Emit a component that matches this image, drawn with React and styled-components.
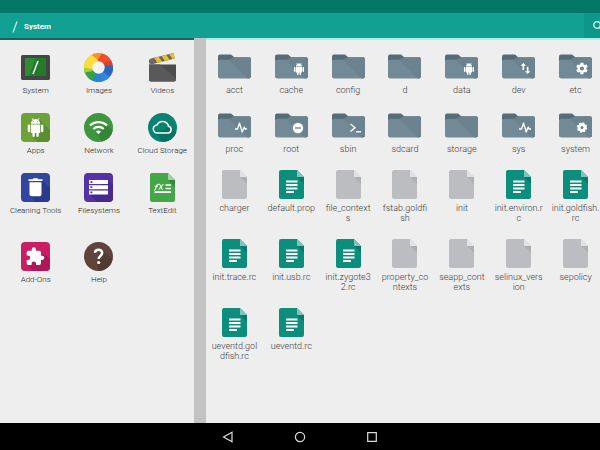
import React from 'react'
import styled, { createGlobalStyle } from 'styled-components'

const places = [
  { name: 'System', icon: 'system' },
  { name: 'Images', icon: 'images' },
  { name: 'Videos', icon: 'videos' },
  { name: 'Apps', icon: 'apps' },
  { name: 'Network', icon: 'network' },
  { name: 'Cloud Storage', icon: 'cloud' },
  { name: 'Cleaning Tools', icon: 'cleaning' },
  { name: 'Filesystems', icon: 'filesystems' },
  { name: 'TextEdit', icon: 'textedit' },
]

const extras = [
  { name: 'Add-Ons', icon: 'addons' },
  { name: 'Help', icon: 'help' },
]

const files = [
  { name: 'acct', type: 'folder' },
  { name: 'cache', type: 'folder', badge: 'android' },
  { name: 'config', type: 'folder' },
  { name: 'd', type: 'folder' },
  { name: 'data', type: 'folder', badge: 'android' },
  { name: 'dev', type: 'folder', badge: 'arrows' },
  { name: 'etc', type: 'folder', badge: 'gear' },
  { name: 'proc', type: 'folder', badge: 'pulse' },
  { name: 'root', type: 'folder', badge: 'minus' },
  { name: 'sbin', type: 'folder', badge: 'prompt' },
  { name: 'sdcard', type: 'folder' },
  { name: 'storage', type: 'folder' },
  { name: 'sys', type: 'folder', badge: 'pulse' },
  { name: 'system', type: 'folder', badge: 'disc' },
  { name: 'charger', type: 'blank' },
  { name: 'default.prop', type: 'text' },
  { name: 'file_context\ns', type: 'blank' },
  { name: 'fstab.goldfi\nsh', type: 'blank' },
  { name: 'init', type: 'blank' },
  { name: 'init.environ.r\nc', type: 'text' },
  { name: 'init.goldfish.\nrc', type: 'text' },
  { name: 'init.trace.rc', type: 'text' },
  { name: 'init.usb.rc', type: 'text' },
  { name: 'init.zygote3\n2.rc', type: 'text' },
  { name: 'property_co\nntexts', type: 'blank' },
  { name: 'seapp_cont\nexts', type: 'blank' },
  { name: 'selinux_vers\nion', type: 'blank' },
  { name: 'sepolicy', type: 'blank' },
  { name: 'ueventd.gol\ndfish.rc', type: 'text' },
  { name: 'ueventd.rc', type: 'text' },
]

function Android() {
  return (
    <g fill="#fff">
      <path d="M6 8h12v10a1 1 0 0 1-1 1h-1v3.500a1.500 1.500 0 0 1-3 0V19h-2v3.500a1.500 1.500 0 0 1-3 0V19H7a1 1 0 0 1-1-1z" />
      <path d="M3.500 8A1.500 1.500 0 0 1 5 9.500v7a1.500 1.500 0 0 1-3 0v-7A1.500 1.500 0 0 1 3.500 8zM20.500 8A1.500 1.500 0 0 1 22 9.500v7a1.500 1.500 0 0 1-3 0v-7A1.500 1.500 0 0 1 20.500 8z" />
      <path d="M15.530 2.160l1.300-1.300a.5.5 0 0 0-.7-.7l-1.480 1.480A5.900 5.900 0 0 0 12 1c-.960 0-1.860.230-2.660.630L7.850.150a.5.5 0 0 0-.7.7l1.310 1.310A5.980 5.980 0 0 0 6 7h12a5.960 5.960 0 0 0-2.470-4.840zM10 5H9V4h1zm5 0h-1V4h1z" />
    </g>
  )
}

const gearPath = 'M19.430 12.980c.040-.320.070-.640.070-.980s-.030-.660-.070-.980l2.110-1.650a.5.5 0 0 0 .120-.640l-2-3.460a.5.5 0 0 0-.610-.220l-2.490 1a7.300 7.300 0 0 0-1.690-.980l-.380-2.650A.49.49 0 0 0 14 2h-4a.49.49 0 0 0-.490.420l-.380 2.650c-.610.250-1.170.590-1.690.980l-2.490-1a.49.49 0 0 0-.610.220l-2 3.460a.49.49 0 0 0 .120.640l2.110 1.650c-.040.320-.070.650-.070.980s.030.660.070.980l-2.110 1.650a.5.5 0 0 0-.120.640l2 3.460c.120.220.390.3.610.220l2.490-1c.520.4 1.080.730 1.690.980l.380 2.650c.030.240.240.420.490.420h4c.250 0 .460-.180.490-.420l.380-2.650a7.700 7.700 0 0 0 1.690-.980l2.490 1c.230.090.490 0 .610-.220l2-3.460a.5.5 0 0 0-.120-.640zM12 15.500a3.500 3.500 0 1 1 0-7 3.500 3.500 0 0 1 0 7z'

const badges = {
  android: <g transform="translate(18 9) scale(.5)"><Android /></g>,
  arrows: (
    <g transform="translate(17 8) scale(.54)" fill="#fff">
      <path d="M8 2l5 5H9.500v8h-3V7H3z" />
      <path d="M16 22l-5-5h3.500V9h3v8H21z" />
    </g>
  ),
  gear: <path transform="translate(16 7.500) scale(.58)" fill="#fff" d={gearPath} />,
  pulse: <path d="M17 16h2.500l2-6 2.700 9 2-5 .8 2H29" fill="none" stroke="#fff" strokeWidth="1.300" strokeLinejoin="round" />,
  minus: (
    <g>
      <circle cx="23" cy="15" r="5.200" fill="#fff" />
      <path d="M20 15h6" stroke="#66808c" strokeWidth="1.300" />
    </g>
  ),
  prompt: <path d="M18.500 11l4.500 3.700-4.500 3.800M24 18.800h5" fill="none" stroke="#fff" strokeWidth="1.400" />,
  disc: (
    <g>
      <circle cx="23" cy="14.500" r="4.400" fill="none" stroke="#fff" strokeWidth="1.600" strokeDasharray="1.800 1.655" />
      <circle cx="23" cy="14.500" r="4.400" fill="#fff" />
      <circle cx="23" cy="14.500" r="1.500" fill="#6c858f" />
    </g>
  ),
}

function FolderIcon({ badge }) {
  return (
    <svg width="33" height="25" viewBox="0 0 33 25" aria-hidden="true">
      <path d="M0 7V2.500A2 2 0 0 1 2 .5h11l3 2.500v4z" fill="#566d78" />
      <path d="M0 8c.2-1.600 1-2.300 2.500-2.300H13l3-2.500h15a2 2 0 0 1 2 2V22a2.500 2.500 0 0 1-2.500 2.500h-28A2.500 2.500 0 0 1 0 22z" fill="#718a96" />
      <path d="M11 6L29.500 24.500h1A2.500 2.500 0 0 0 33 22V5.200a2 2 0 0 0-2-2H16z" fill="#6a838e" />
      {badge && badges[badge]}
    </svg>
  )
}

function FileIcon({ text }) {
  return (
    <svg width="25" height="29" viewBox="0 0 25 29" aria-hidden="true">
      <path d="M2 0h16l7 7v20a2 2 0 0 1-2 2H2a2 2 0 0 1-2-2V2a2 2 0 0 1 2-2z" fill={text ? '#0c8e7c' : '#bcbdc0'} />
      <path d="M18 7h7v7z" fill={text ? '#087a6b' : '#aeafb2'} />
      <path d="M18 0l7 7h-7z" fill={text ? '#7fc5bb' : '#e2e2e3'} />
      {text && <path d="M7 11.500h11.500M7 15h11.500M7 18.500h11.500M7 22h8" stroke="#fff" strokeWidth="1.900" />}
    </svg>
  )
}

const placeArt = {
  system: (
    <g>
      <rect x="0" y="2" width="29" height="25" rx="1.500" fill="#454545" />
      <rect x="4" y="5" width="21" height="18" fill="#2f8b34" />
      <path d="M15 5h10v18H8z" fill="#237a2b" />
      <path d="M17 8l-5 13" stroke="#fff" strokeWidth="1.400" />
    </g>
  ),
  images: (
    <g>
      <circle cx="14.500" cy="14.500" r="14.500" fill="#eee" />
      <path d="M14.500 0A14.500 14.500 0 0 1 25 4.500L19 11 10 9 5.500 3A14.500 14.500 0 0 1 14.500 0z" fill="#fb8c28" />
      <path d="M18 .5A14.500 14.500 0 0 1 28.500 11L21 13 13 7.500z" fill="#ef4b2f" />
      <path d="M27 7.500A14.500 14.500 0 0 1 28 20l-7-2-2-7.500z" fill="#d9412c" />
      <path d="M28.800 12.500A14.500 14.500 0 0 1 22 27l-5-6 4-8z" fill="#2667c4" />
      <path d="M26 23.500a14.500 14.500 0 0 1-14 5.200L11 22l8-3z" fill="#3286e0" />
      <path d="M18 28.500A14.500 14.500 0 0 1 3.500 24L9 17l8 4z" fill="#2c82d4" />
      <path d="M7.500 27.200A14.500 14.500 0 0 1 0 14.500l7 .5 5 7z" fill="#35a345" />
      <path d="M1 19.500A14.500 14.500 0 0 1 3.500 5L10 9 8.500 18z" fill="#a5cf3b" />
      <path d="M0 14.500A14.500 14.500 0 0 1 7.500 1.800L14 7l-6 9z" fill="#fddc3e" />
      <circle cx="14.500" cy="14.500" r="6.200" fill="#f3f3f3" />
    </g>
  ),
  videos: (
    <g>
      <path d="M1 7.500a3 3 0 0 1 2-2L25.500 0l1.300 5.500L4 11.300a3 3 0 0 1-3-3.800z" fill="#6b675f" />
      <path d="M6 4.800l4.700-1.100 3.500 5.200-4.700 1.100zM13.500 2.900l4.700-1.100L21.700 7 17 8.100zM21 1.100L25.500 0l1.300 5.500-2.300.6z" fill="#e9bd35" />
      <path d="M1 11.500h27v15a2 2 0 0 1-2 2H3a2 2 0 0 1-2-2z" fill="#4d4d4d" />
      <path d="M1 11.500h11l16 14v1a2 2 0 0 1-2 2H3a2 2 0 0 1-2-2z" fill="#5a5959" />
      <circle cx="3.500" cy="8.500" r="2.500" fill="#6b6b6b" />
    </g>
  ),
  apps: (
    <g>
      <rect width="29" height="29" rx="4" fill="#6da23b" />
      <path d="M18 6l11 11v8a4 4 0 0 1-4 4h-8l-6-6z" fill="#5b8e30" />
      <g transform="translate(5.200 5.200) scale(.78)"><Android /></g>
    </g>
  ),
  network: (
    <g>
      <circle cx="14.500" cy="14.500" r="14.500" fill="#3f963f" />
      <path d="M23 12l5.700 5.700A14.500 14.500 0 0 1 18 28.500L12 20z" fill="#358438" />
      <g fill="none" stroke="#fff" strokeWidth="2.300">
        <path d="M6 12.500a12.200 12.200 0 0 1 17 0" />
        <path d="M9.300 16a7.500 7.500 0 0 1 10.400 0" />
      </g>
      <path d="M14.500 21.500l-2.500-3a4 4 0 0 1 5 0z" fill="#fff" />
    </g>
  ),
  cloud: (
    <g>
      <circle cx="14.500" cy="14.500" r="14.500" fill="#098371" />
      <path d="M22 13l6.500 6A14.500 14.500 0 0 1 15 29l-7-8.500z" fill="#067262" />
      <path d="M9.500 20a4 4 0 0 1-.4-8 6 6 0 0 1 11.400 1.300A3.400 3.400 0 0 1 20 20z" fill="none" stroke="#fff" strokeWidth="1.500" />
    </g>
  ),
  cleaning: (
    <g>
      <rect width="29" height="29" rx="4" fill="#32469f" />
      <path d="M21 7l8 8v10a4 4 0 0 1-4 4H15l-6-6z" fill="#293a8c" />
      <path d="M7.500 6.200h4l1-1h4l1 1h4V8h-14zM8.500 9.200h12v12a2 2 0 0 1-2 2h-8a2 2 0 0 1-2-2z" fill="#fff" />
    </g>
  ),
  filesystems: (
    <g>
      <rect width="29" height="29" rx="4" fill="#5433a6" />
      <path d="M24 7l5 5v13a4 4 0 0 1-4 4H13l-8-8z" fill="#46288f" />
      <path d="M5 7h19v4H5zM5 12.200h19v4H5zM5 17.400h19v4H5z" fill="#fff" />
      <path d="M6.500 8.200h1.800V10H6.500zM6.500 13.300h1.800v1.800H6.500zM6.500 18.500h1.800v1.800H6.500z" fill="#46288f" />
    </g>
  ),
  textedit: (
    <g>
      <path d="M4 0h16l7 7v20a2 2 0 0 1-2 2H4a2 2 0 0 1-2-2V2a2 2 0 0 1 2-2z" fill="#43a748" />
      <path d="M20 7h7v7z" fill="#338a39" />
      <path d="M20 0l7 7h-7z" fill="#9fd3a1" />
      <g fill="none" stroke="#fff">
        <path d="M6 17c1.500.5 1.700-1 2.100-2.800C8.500 12 9 11 10.800 11.200M6.500 13.200h3.500" strokeWidth="1.100" />
        <path d="M11 11.200c2-.4 1.800 5.800 4 5.300M15.500 11.200c-1.500 0-3.500 5.300-5 5.300" strokeWidth="1.100" />
        <path d="M17.500 12H23M17.500 15.500H23M6.500 19.200H23" strokeWidth="1.700" />
      </g>
    </g>
  ),
  addons: (
    <g>
      <rect width="29" height="29" rx="4" fill="#c81e64" />
      <path d="M23 12l6 5v8a4 4 0 0 1-4 4H12l-6-6z" fill="#b01757" />
      <path transform="translate(4 4.500) scale(.84)" fill="#fff" d="M20.500 11H19V7a2 2 0 0 0-2-2h-4V3.500a2.500 2.500 0 0 0-5 0V5H4a2 2 0 0 0-2 2v3.800h1.500a2.700 2.700 0 0 1 0 5.400H2V20a2 2 0 0 0 2 2h3.800v-1.500a2.700 2.700 0 0 1 5.400 0V22H17a2 2 0 0 0 2-2v-4h1.500a2.500 2.500 0 0 0 0-5z" />
    </g>
  ),
  help: (
    <g>
      <circle cx="14.500" cy="14.500" r="14.500" fill="#5e443b" />
      <path d="M18 8l10.500 9A14.500 14.500 0 0 1 15 29l-2-7z" fill="#533a32" />
      <path d="M11 10.800c.2-4 7.200-4 7.200 0 0 3-3.500 3.200-3.500 6.200" fill="none" stroke="#fff" strokeWidth="2.500" />
      <circle cx="14.700" cy="20.500" r="1.600" fill="#fff" />
    </g>
  ),
}

function PlaceList({ items }) {
  return (
    <PlaceGrid>
      {items.map((item) => (
        <Item key={item.name}>
          <IconBox>
            <svg width="29" height="29" viewBox="0 0 29 29" aria-hidden="true">
              {placeArt[item.icon]}
            </svg>
          </IconBox>
          <Label $small>{item.name}</Label>
        </Item>
      ))}
    </PlaceGrid>
  )
}

function App() {
  return (
    <Screen>
      <GlobalStyle />
      <StatusBar />
      <Toolbar>
        <Crumbs aria-label="Path">
          <svg width="6" height="12" viewBox="0 0 6 12" aria-hidden="true">
            <path d="M5 .5L1 11.500" stroke="#b9e8e2" strokeWidth="1.300" />
          </svg>
          <Crumb href="#">System</Crumb>
        </Crumbs>
        <SearchButton aria-label="Search">
          <svg width="12" height="12" viewBox="0 0 12 12" aria-hidden="true">
            <circle cx="5" cy="5" r="3.300" fill="none" stroke="#d5f3ee" strokeWidth="1.300" />
            <path d="M7.500 7.500L11 11" stroke="#d5f3ee" strokeWidth="1.400" />
          </svg>
        </SearchButton>
      </Toolbar>
      <Panes>
        <PlacesPane>
          <PlaceList items={places} />
          <PlaceList items={extras} />
        </PlacesPane>
        <Divider />
        <FilesPane>
          <FileGrid>
            {files.map((file) => (
              <Item key={file.name}>
                <IconBox>
                  {file.type === 'folder' ? <FolderIcon badge={file.badge} /> : <FileIcon text={file.type === 'text'} />}
                </IconBox>
                <Label>{file.name}</Label>
              </Item>
            ))}
          </FileGrid>
        </FilesPane>
      </Panes>
      <NavBar>
        <NavButton aria-label="Back">
          <svg width="12" height="12" viewBox="0 0 12 12"><path d="M10 1.200v9.600L1.500 6z" /></svg>
        </NavButton>
        <NavButton aria-label="Home">
          <svg width="12" height="12" viewBox="0 0 12 12"><circle cx="6" cy="6" r="4.600" /></svg>
        </NavButton>
        <NavButton aria-label="Recent apps">
          <svg width="12" height="12" viewBox="0 0 12 12"><path d="M1.700 1.700h8.600v8.600H1.700z" /></svg>
        </NavButton>
      </NavBar>
    </Screen>
  )
}

export default App

const GlobalStyle = createGlobalStyle`
  * {
    box-sizing: border-box;
  }

  body {
    margin: 0;
    font-family: Roboto, "Liberation Sans", sans-serif;
    background: #eee;
  }

  button {
    padding: 0;
    border: none;
    background: none;
    font: inherit;
    cursor: pointer;
  }

  svg {
    display: block;
  }
`

const Screen = styled.div`
  display: flex;
  flex-direction: column;
  min-height: 100vh;
  overflow: hidden;
`

const StatusBar = styled.div`
  height: 13px;
  background: #037869;
`

const Toolbar = styled.header`
  display: flex;
  justify-content: space-between;
  height: 25px;
  background: #12a093;
`

const Crumbs = styled.nav`
  display: flex;
  align-items: center;
  gap: 6px;
  padding: 2px 0 0 12px;
`

const Crumb = styled.a`
  color: #fff;
  font-size: 8px;
  font-weight: 700;
  line-height: 12px;
  text-decoration: none;
`

const SearchButton = styled.button`
  display: flex;
  align-items: center;
  width: 20px;
  margin-right: -4px;
  padding-left: 8px;
  background: #0c978a;
`

const Panes = styled.main`
  display: flex;
  flex: 1;
`

const PlacesPane = styled.section`
  flex: 0 0 194px;
  padding: 13px 0 13px 4px;
  border-top: 2px solid #1f625c;
  background: #eee;
`

const Divider = styled.div`
  flex: 0 0 12px;
  background: #c3c3c3;
`

/* the last column runs slightly past the screen edge */
const FilesPane = styled.section`
  flex: 1;
  margin-right: -4px;
  padding: 12px 0;
  border-top: 2px solid #a5f3e6;
  background: #eee;
`

const PlaceGrid = styled.div`
  display: grid;
  grid-template-columns: repeat(3, 1fr);
  row-gap: 17px;

  & + & {
    margin-top: 26px;
  }
`

const FileGrid = styled.div`
  display: grid;
  grid-template-columns: repeat(7, 1fr);
  row-gap: 16px;
`

const Item = styled.button`
  display: flex;
  flex-direction: column;
  align-items: center;
  justify-content: flex-start;
  gap: 4px;
  min-width: 0;
`

const IconBox = styled.span`
  display: flex;
  align-items: center;
  justify-content: center;
  height: 29px;
`

const Label = styled.span`
  color: ${(props) => (props.$small ? '#222' : '#3c3c3c')};
  font-size: ${(props) => (props.$small ? '8px' : '9px')};
  font-weight: 300;
  line-height: 10px;
  text-align: center;
  white-space: pre-line;
`

const NavBar = styled.footer`
  display: flex;
  align-items: center;
  justify-content: center;
  gap: 60px;
  height: 27px;
  background: #000;
`

const NavButton = styled.button`
  svg {
    fill: none;
    stroke: #dcdcdc;
    stroke-width: 1.2;
  }
`
